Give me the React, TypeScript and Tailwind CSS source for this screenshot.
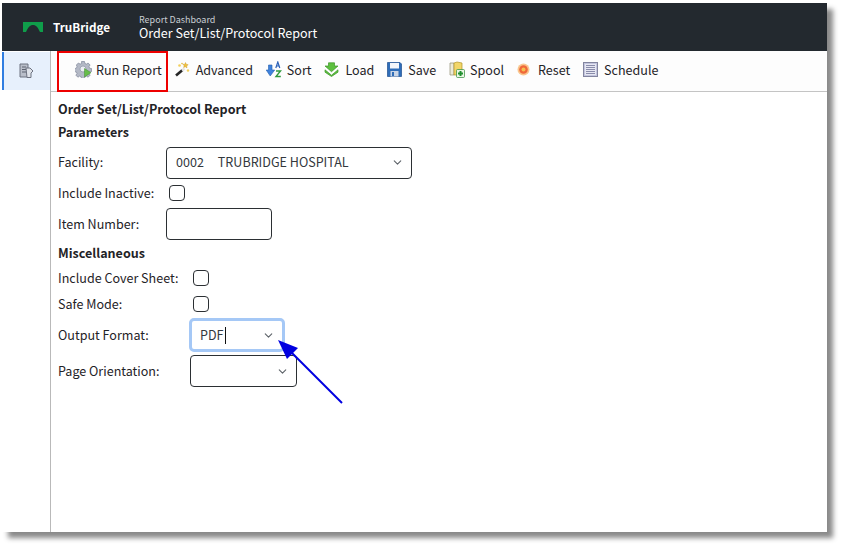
import { ChevronDown } from "lucide-react";

const font = { fontFamily: '"Noto Sans CJK SC", "Noto Sans", sans-serif' };

function GearRun() {
  return (
    <svg width="17" height="17" viewBox="0 0 17 17">
      <path d="M6.500 .5h3l.4 2 1.500.6 1.700-1.100 2 2-1.100 1.700.6 1.500 2 .4v3l-2 .4-.6 1.500 1.100 1.700-2 2-1.700-1.100-1.500.6-.4 2h-3l-.4-2-1.500-.6-1.700 1.100-2-2 1.100-1.700-.6-1.500-2-.4v-3l2-.4.6-1.500L1.400 4l2-2 1.700 1.100 1.500-.6z" fill="#b4b9c6" stroke="#80869a" strokeWidth="0.7" />
      <circle cx="8" cy="8" r="3" fill="#eceef3" stroke="#8d93a5" strokeWidth="0.7" />
      <path d="M9.500 7.500l6.500 4.200-6.500 4.300z" fill="#66bd4a" stroke="#3f8f2e" strokeWidth="0.5" />
    </svg>
  );
}

function Wand() {
  return (
    <svg width="15" height="15" viewBox="0 0 15 15">
      <path d="M1 13.500L7.500 8" stroke="#262626" strokeWidth="2.600" />
      <path d="M7 8.500l2.500-2" stroke="#e4e4e4" strokeWidth="2.600" />
      <path d="M10.500 .5l.8 1.800 1.900.4-1.500 1.200.3 2-1.700-1.100-1.700.8.500-1.900-1.300-1.500 2 .1z" fill="#f0c23c" stroke="#c8962a" strokeWidth="0.4" />
      <circle cx="4.500" cy="3.500" r="1.300" fill="#f2cf5b" />
      <circle cx="13" cy="8.500" r="1.200" fill="#f2cf5b" />
      <circle cx="7" cy="1.500" r="0.800" fill="#e4b93c" />
    </svg>
  );
}

function SortAz() {
  return (
    <svg width="16" height="17" viewBox="0 0 16 17">
      <path d="M2.500 4h3.500v5h2.700l-4.500 6L.2 9h2.300z" fill="#3f82dc" stroke="#235fb0" strokeWidth="0.6" />
      <path d="M9.800 7l2-6 2 6M10.600 5h2.400" fill="none" stroke="#2d62b8" strokeWidth="1.200" />
      <path d="M10 10h4.500l-4.500 5.500h4.800" fill="none" stroke="#2f9a3c" strokeWidth="1.400" />
    </svg>
  );
}

function LoadArrow() {
  return (
    <svg width="15" height="15" viewBox="0 0 15 15">
      <path d="M4.500 .8h6v3.200h3.500L7.500 9.700 1 4h3.500z" fill="#5dc03f" stroke="#3d952a" strokeWidth="0.7" />
      <path d="M1 7.800l6.500 5.400L14 7.800v2.400l-6.500 4.300L1 10.200z" fill="#5dc03f" stroke="#3d952a" strokeWidth="0.7" />
    </svg>
  );
}

function Floppy() {
  return (
    <svg width="15" height="15" viewBox="0 0 15 15">
      <path d="M.5.500h12.500l1.500 1.500v12.500H.5z" fill="#2f6db8" stroke="#1e4f8f" strokeWidth="0.7" />
      <rect x="3" y="1" width="9" height="5.500" fill="#f4f6fa" />
      <rect x="3.500" y="9" width="8" height="5.500" fill="#c9d5e6" />
      <rect x="5" y="10" width="2" height="4" fill="#2f6db8" />
    </svg>
  );
}

function Spool() {
  return (
    <svg width="16" height="17" viewBox="0 0 16 17">
      <path d="M1 2h4v12H1z" fill="#ecead9" stroke="#8f8d70" strokeWidth="0.7" />
      <path d="M5 2l3-1 5 1v12H5z" fill="#f2d668" stroke="#b09328" strokeWidth="0.7" />
      <rect x="7.500" y="8.500" width="8" height="8" rx="1" fill="#e9f6e4" stroke="#2f8a38" strokeWidth="0.7" />
      <path d="M11.500 10v5M9 12.500h5" stroke="#1f8f2e" strokeWidth="2" />
    </svg>
  );
}

function ResetDot() {
  return (
    <svg width="13" height="13" viewBox="0 0 13 13">
      <circle cx="6.500" cy="6.500" r="6" fill="#f9c78f" />
      <circle cx="6.500" cy="6.500" r="4.300" fill="#f0683a" />
      <circle cx="6.500" cy="6.500" r="2" fill="#f4c04e" />
    </svg>
  );
}

function ScheduleList() {
  return (
    <svg width="15" height="15" viewBox="0 0 15 15">
      <rect x="0.500" y="0.500" width="14" height="14" fill="#c3c5de" stroke="#83859f" />
      <rect x="2" y="2" width="11" height="11" fill="#e6e7f2" />
      <path d="M3 3.500h9M3 5.500h9M3 7.500h9M3 9.500h9M3 11.500h9" stroke="#8a8cab" />
    </svg>
  );
}

function NavIcon() {
  return (
    <svg width="15" height="16" viewBox="0 0 15 16">
      <path d="M1 1h8v13H1z" fill="#b9bec9" stroke="#6d7280" />
      <path d="M3 4h4M3 6.500h4M3 9h4" stroke="#5d6270" />
      <path d="M7 5h4l3 3-2 2v4.500H8z" fill="#dfe3ea" stroke="#6d7280" />
    </svg>
  );
}

function Logo() {
  return (
    <svg width="20" height="10" viewBox="0 0 20 10">
      <path d="M0 0h20v10h-3C15 5.500 13 3 10 3S5 5.500 3 10H0z" fill="#0f9d4a" />
    </svg>
  );
}

const tools = [
  { label: "Run Report", icon: <GearRun /> },
  { label: "Advanced", icon: <Wand /> },
  { label: "Sort", icon: <SortAz /> },
  { label: "Load", icon: <LoadArrow /> },
  { label: "Save", icon: <Floppy /> },
  { label: "Spool", icon: <Spool /> },
  { label: "Reset", icon: <ResetDot /> },
  { label: "Schedule", icon: <ScheduleList /> },
];

function Checkbox() {
  return <span className="block h-4 w-4 rounded-[4px] border border-[#2b2f33] bg-white" />;
}

export default function App() {
  return (
    <div className="relative h-[546px] w-[841px] overflow-hidden bg-white pl-[2px] pt-[3px] text-[12.55px] leading-[20px] text-[#1f2327]" style={font}>
      <div className="flex h-[529px] w-[825px] flex-col bg-white shadow-[6px_6px_5px_#8a8a8a]">
        <header className="flex h-[48px] shrink-0 items-center bg-[#23292f] text-white">
          <div className="ml-[21px]"><Logo /></div>
          <span className="ml-[10px] w-[86px] text-[11.7px] font-bold">TruBridge</span>
          <div className="flex flex-col">
            <span className="text-[9px] leading-[11px] text-[#c9ced3]">Report Dashboard</span>
            <span className="text-[12.55px] leading-[15px]">Order Set/List/Protocol Report</span>
          </div>
        </header>
        <div className="flex min-h-0 flex-1">
          <aside className="w-[49px] shrink-0 border-r border-[#b9b9b9] pt-px">
            <div className="flex h-[38px] items-center justify-center border-l-2 border-[#2f7de1] bg-[#e7f0fc] pr-[1px]">
              <NavIcon />
            </div>
          </aside>
          <main className="min-w-0 flex-1">
            <div className="flex h-[41px] items-center gap-[12.9px] border-b border-[#c4c4c4] bg-[#fdfdfd] pb-[3px] pl-[24px]">
              {tools.map((t) => (
                <div key={t.label} className="flex items-center">
                  <span className="flex w-[21px] shrink-0 items-center">{t.icon}</span>
                  <span>{t.label}</span>
                </div>
              ))}
            </div>
            <div className="pl-[7px] pt-[7px]">
              <h1 className="font-bold">Order Set/List/Protocol Report</h1>
              <h2 className="mt-[3px] font-bold">Parameters</h2>
              <div className="mt-[5px] flex items-center">
                <span className="w-[108px] pb-[3px]">Facility:</span>
                <div className="flex h-[32px] w-[246px] items-center justify-between rounded-[4px] border border-[#2b2f33] pb-[2px] pl-[9px] pr-[7px] text-[#33383d]">
                  <span className="flex gap-[14px]">
                    <span>0002</span>
                    <span>TRUBRIDGE HOSPITAL</span>
                  </span>
                  <ChevronDown size={13} strokeWidth={2} className="text-[#5d6369]" />
                </div>
              </div>
              <div className="mt-[6px] flex h-[16px] items-center">
                <span className="w-[111px]">Include Inactive:</span>
                <Checkbox />
              </div>
              <div className="mt-[7px] flex items-center">
                <span className="w-[108px]">Item Number:</span>
                <div className="h-[32px] w-[106px] rounded-[4px] border border-[#2b2f33]" />
              </div>
              <h2 className="mt-[3px] font-bold">Miscellaneous</h2>
              <div className="mt-[7px] flex h-[16px] items-center">
                <span className="w-[135px]">Include Cover Sheet:</span>
                <Checkbox />
              </div>
              <div className="mt-[10px] flex h-[16px] items-center">
                <span className="w-[135px]">Safe Mode:</span>
                <Checkbox />
              </div>
              <div className="mt-[6px] flex items-center">
                <span className="w-[131px]">Output Format:</span>
                <div className="flex h-[34px] w-[96px] items-center justify-between rounded-[5px] border-[3px] border-[#a5c8f6] pl-[8px] pr-[7px] text-[#33383d]">
                  <span className="flex items-center">
                    PDF
                    <span className="ml-[1px] h-[17px] w-px bg-[#111]" />
                  </span>
                  <ChevronDown size={13} strokeWidth={2} className="text-[#5d6369]" />
                </div>
              </div>
              <div className="mt-[3px] flex items-center">
                <span className="w-[132px]">Page Orientation:</span>
                <div className="flex h-[32px] w-[107px] items-center justify-end rounded-[4px] border border-[#2b2f33] pr-[7px]">
                  <ChevronDown size={13} strokeWidth={2} className="text-[#5d6369]" />
                </div>
              </div>
            </div>
          </main>
        </div>
      </div>
      {/* annotations drawn over the screenshot */}
      <div className="absolute left-[57px] top-[51px] h-[41px] w-[111px] border-2 border-[#ee0000]" />
      <svg className="absolute left-0 top-0" width="841" height="546" viewBox="0 0 841 546">
        <path d="M342 403L290 351" stroke="#0000e0" strokeWidth="2" />
        <path d="M278 340L298 348L287 359z" fill="#0000e0" />
      </svg>
    </div>
  );
}
